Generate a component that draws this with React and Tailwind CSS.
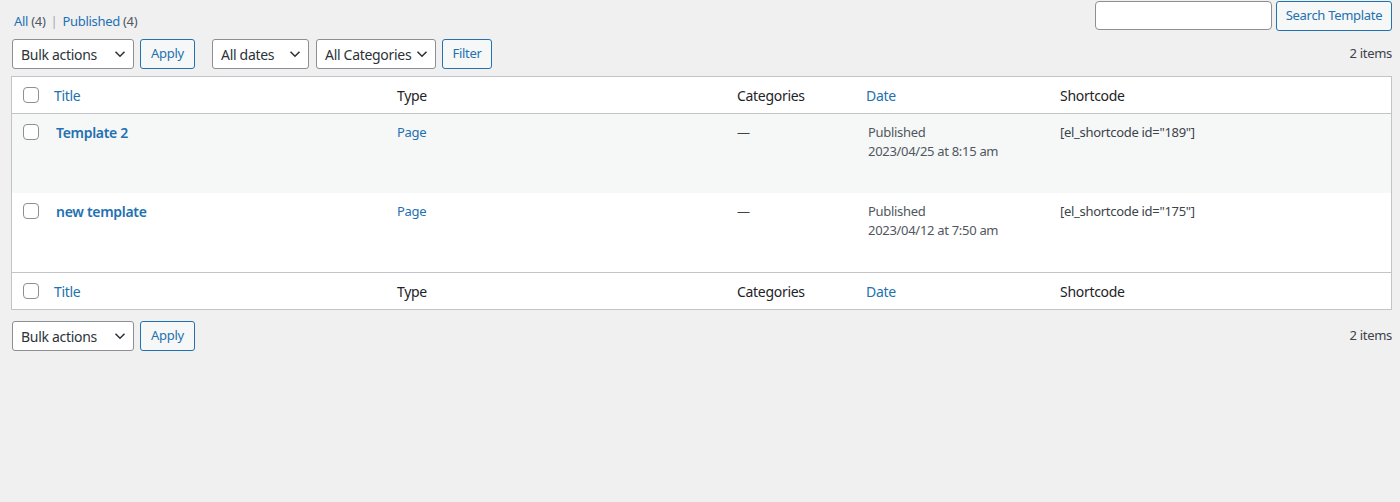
import React from "react";

const rows = [
  { id: 189, title: "Template 2", type: "Page", date: "2023/04/25 at 8:15 am", shade: true },
  { id: 175, title: "new template", type: "Page", date: "2023/04/12 at 7:50 am", shade: false },
];

const cols = "grid grid-cols-[32px_343px_340px_129px_194px_1fr]";

const Chevron = () => (
  <svg width="12" height="8" viewBox="0 0 12 8" className="absolute right-[7px] top-1/2 -translate-y-1/2">
    <path d="M1.5 1.8 L6 6.2 L10.5 1.8" fill="none" stroke="#2c3338" strokeWidth="1.6" />
  </svg>
);

const Select = ({ label, w }) => (
  <div className={`relative h-[30px] ${w} rounded-[3px] border border-[#8c8f94] bg-white pl-[8px] flex items-center text-[14px] text-[#2c3338]`}>
    {label}
    <Chevron />
  </div>
);

const Button = ({ label, w }) => (
  <button className={`h-[30px] ${w} rounded-[3px] border border-[#2271b1] bg-[#f6f7f7] text-[13px] text-[#2271b1] flex items-center justify-center`}>
    {label}
  </button>
);

const Check = () => <span className="block w-4 h-4 rounded-[4px] border border-[#8c8f94] bg-white" />;

const HeadRow = ({ top }) => (
  <div className={`${cols} h-[37px] items-center text-[14px] ${top ? "border-b" : "border-t"} border-[#c3c4c7]`}>
    <div className="pl-[11px] flex"><Check /></div>
    <div className="pl-[10px] text-[#2271b1]">Title</div>
    <div className="pl-[10px] text-[#1d2327]">Type</div>
    <div className="pl-[10px] text-[#1d2327]">Categories</div>
    <div className="pl-[10px] text-[#2271b1]">Date</div>
    <div className="pl-[10px] text-[#1d2327]">Shortcode</div>
  </div>
);

const Pager = ({ bulkOnly }) => (
  <div className="flex items-center h-[30px] pl-px">
    <Select label="Bulk actions" w="w-[122px]" />
    <div className="ml-[6px]"><Button label="Apply" w="w-[55px]" /></div>
    {!bulkOnly && (
      <div className="flex items-center ml-[17px] gap-[7px]">
        <Select label="All dates" w="w-[97px]" />
        <Select label="All Categories" w="w-[120px]" />
        <div className="-ml-[1px]"><Button label="Filter" w="w-[50px]" /></div>
      </div>
    )}
    <span className="ml-auto text-[13px] text-[#3c434a]">2 items</span>
  </div>
);

export default function App() {
  return (
    <div className="min-h-[502px] bg-[#f0f0f1] pl-[11px] pr-[8px] font-['Noto_Sans',sans-serif] tracking-[-0.3px]">
      <div className="flex items-start pt-px h-[39px]">
        <div className="mt-[11px] ml-[3px] text-[13px] text-[#50575e]">
          <span className="text-[#2271b1]">All <span className="text-[#50575e]">(4)</span></span>
          <span className="mx-[5px] text-[#a7aaad]">|</span>
          <span className="text-[#2271b1]">Published <span className="text-[#50575e]">(4)</span></span>
        </div>
        <div className="ml-auto flex gap-[4px]">
          <div className="h-[29px] w-[177px] rounded-[4px] border border-[#8c8f94] bg-white" />
          <Button label="Search Template" w="w-[116px] h-[29px]" />
        </div>
      </div>

      <Pager />

      <div className="mt-[7px] border border-[#c3c4c7] bg-white">
        <HeadRow top />
        {rows.map((r) => (
          <div key={r.id} className={`${cols} h-[79px] ${r.shade ? "bg-[#f6f7f7]" : "bg-white"}`}>
            <div className="pl-[11px] pt-[10px]"><Check /></div>
            <div className="pl-[12px] pt-[8px] text-[14px] font-semibold text-[#2271b1]">{r.title}</div>
            <div className="pl-[10px] pt-[9px] text-[13px] text-[#2271b1]">{r.type}</div>
            <div className="pl-[10px] pt-[9px] text-[13px] text-[#3c434a]">—</div>
            <div className="pl-[12px] pt-[9px] text-[13px] leading-[19px] text-[#50575e]">
              <div>Published</div>
              <div>{r.date}</div>
            </div>
            <div className="pl-[10px] pt-[9px] text-[13px] text-[#3c434a]">[el_shortcode id="{r.id}"]</div>
          </div>
        ))}
        <HeadRow />
      </div>

      <div className="mt-[11px]">
        <Pager bulkOnly />
      </div>
    </div>
  );
}
